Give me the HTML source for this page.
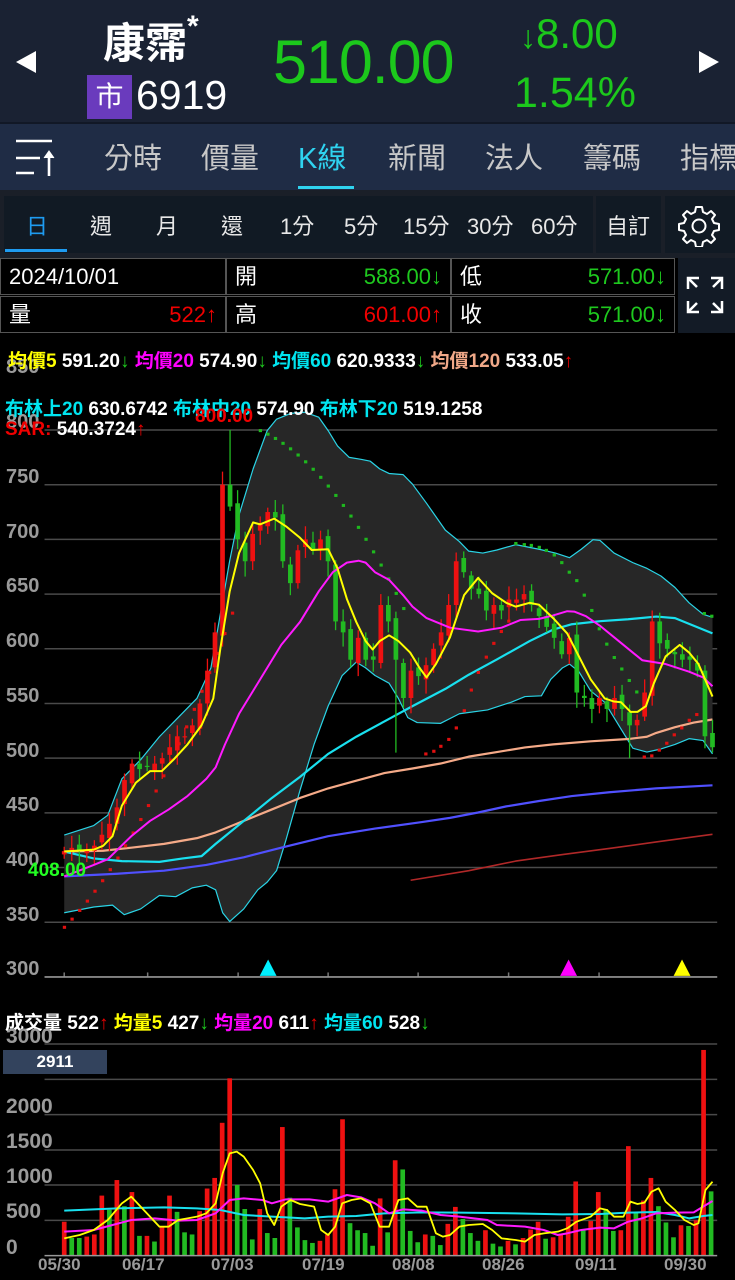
<!DOCTYPE html>
<html><head><meta charset="utf-8">
<style>
*{margin:0;padding:0;box-sizing:border-box}
body{width:735px;height:1280px;background:#000;overflow:hidden;position:relative;font-family:"Liberation Sans","Noto Sans CJK TC",sans-serif;color:#fff}
.abs{position:absolute}
#hdr{left:0;top:0;width:735px;height:122px;background:#1a2233}
#tabs{left:0;top:122px;width:735px;height:68px;background:#1f2c45;border-top:2px solid #111826}
#gap{left:0;top:190px;width:735px;height:68px;background:#1a1f28}
.tab{position:absolute;top:135px;font-size:29px;color:#c8c8c8;white-space:nowrap}
.pb{position:absolute;top:196px;height:57px;background:#111a24}
.per{position:absolute;top:209px;font-size:22px;color:#e8e8e8;white-space:nowrap}
.cell{position:absolute;height:37px;border:1px solid #555;background:#000;font-size:22px;line-height:35px}
.cell span{top:0!important}
.g{color:#1ec81e}.r{color:#f00000}
.lbl{position:absolute;left:6px;font-size:20px;font-weight:bold;color:#9a9a9a}
.leg{position:absolute;font-size:19px;font-weight:bold;white-space:nowrap}
.dt{position:absolute;top:1255px;font-size:17px;font-weight:bold;color:#9a9a9a}
</style></head><body>
<div id="hdr" class="abs"></div>
<svg class="abs" style="left:14px;top:50px" width="24" height="24"><polygon points="22,1 22,23 2,12" fill="#fff"/></svg>
<svg class="abs" style="left:697px;top:50px" width="24" height="24"><polygon points="2,1 2,23 22,12" fill="#fff"/></svg>
<div class="abs" style="left:103px;top:10px;font-size:42px;font-weight:bold;white-space:nowrap">康霈<span style="font-size:30px;vertical-align:top">*</span></div>
<div class="abs" style="left:87px;top:75px;width:45px;height:44px;background:#6a3bbd;font-size:28px;text-align:center;line-height:44px">市</div>
<div class="abs" style="left:136px;top:72px;font-size:41px">6919</div>
<div class="abs" style="left:273px;top:27px;font-size:61px;color:#1cc81c;letter-spacing:-1px">510.00</div>
<div class="abs" style="left:520px;top:10px;font-size:42px;color:#1cc81c;white-space:nowrap"><span style="font-size:32px;font-weight:bold">&#x2193;</span>8.00</div>
<div class="abs" style="left:514px;top:69px;font-size:43px;color:#1cc81c">1.54%</div>
<div id="tabs" class="abs"></div>
<svg class="abs" style="left:14px;top:138px" width="44" height="40"><g stroke="#fff" stroke-width="2.6" fill="none"><line x1="2" y1="3" x2="38" y2="3"/><line x1="2" y1="20" x2="26" y2="20"/><line x1="2" y1="35" x2="20" y2="35"/><line x1="35" y1="14" x2="35" y2="38"/><polyline points="30,20 35,13 40,20" fill="#fff" stroke-width="1"/></g></svg>
<div class="tab" style="left:104px">分時</div>
<div class="tab" style="left:201px">價量</div>
<div class="tab" style="left:298px;color:#2fd3f0">K線</div>
<div class="abs" style="left:298px;top:186px;width:56px;height:3px;background:#2fd3f0"></div>
<div class="tab" style="left:388px">新聞</div>
<div class="tab" style="left:485px">法人</div>
<div class="tab" style="left:583px">籌碼</div>
<div class="tab" style="left:680px">指標</div>
<div id="gap" class="abs"></div>
<div class="pb" style="left:4px;width:589px"></div>
<div class="pb" style="left:596px;width:65px"></div>
<div class="pb" style="left:665px;width:70px"></div>
<div class="per" style="left:26px;color:#1e9bf0">日</div>
<div class="abs" style="left:5px;top:249px;width:62px;height:3px;background:#1e9bf0"></div>
<div class="per" style="left:90px">週</div>
<div class="per" style="left:156px">月</div>
<div class="per" style="left:221px">還</div>
<div class="per" style="left:280px">1分</div>
<div class="per" style="left:344px">5分</div>
<div class="per" style="left:403px">15分</div>
<div class="per" style="left:467px">30分</div>
<div class="per" style="left:531px">60分</div>
<div class="per" style="left:606px">自訂</div>
<svg class="abs" style="left:678px;top:205px" width="42" height="42" viewBox="0 0 42 42"><path d="M18,2 h6 l1,5 l4,2 l4,-3 l4,4 l-3,4 l2,4 l5,1 v6 l-5,1 l-2,4 l3,4 l-4,4 l-4,-3 l-4,2 l-1,5 h-6 l-1,-5 l-4,-2 l-4,3 l-4,-4 l3,-4 l-2,-4 l-5,-1 v-6 l5,-1 l2,-4 l-3,-4 l4,-4 l4,3 l4,-2 z" fill="none" stroke="#fff" stroke-width="2" stroke-linejoin="round"/><circle cx="21" cy="21" r="6.5" fill="none" stroke="#fff" stroke-width="2"/></svg>
<div class="abs" style="left:0;top:258px;width:735px;height:76px;background:#000"></div>
<div class="cell" style="left:0;top:258px;width:226px"><span style="position:absolute;left:8px">2024/10/01</span></div>
<div class="cell" style="left:0;top:296px;width:226px"><span style="position:absolute;left:8px">量</span><span class="r" style="position:absolute;right:8px">522↑</span></div>
<div class="cell" style="left:226px;top:258px;width:225px"><span style="position:absolute;left:8px">開</span><span class="g" style="position:absolute;right:8px">588.00↓</span></div>
<div class="cell" style="left:226px;top:296px;width:225px"><span style="position:absolute;left:8px">高</span><span class="r" style="position:absolute;right:8px">601.00↑</span></div>
<div class="cell" style="left:451px;top:258px;width:224px"><span style="position:absolute;left:8px">低</span><span class="g" style="position:absolute;right:8px">571.00↓</span></div>
<div class="cell" style="left:451px;top:296px;width:224px"><span style="position:absolute;left:8px">收</span><span class="g" style="position:absolute;right:8px">571.00↓</span></div>
<div class="abs" style="left:678px;top:258px;width:57px;height:75px;background:#131b26"></div>
<svg class="abs" style="left:684px;top:274px" width="42" height="42" viewBox="0 0 42 42"><g stroke="#fff" stroke-width="2.5" fill="none"><path d="M4,15 V4 H15 M4,4 L13,13"/><path d="M27,4 H38 V15 M38,4 L29,13"/><path d="M4,27 V38 H15 M4,38 L13,29"/><path d="M38,27 V38 H27 M38,38 L29,29"/></g></svg>

<div class="lbl" style="top:356px">850</div>
<div class="lbl" style="top:411px">800</div>
<div class="lbl" style="top:466px">750</div>
<div class="lbl" style="top:521px">700</div>
<div class="lbl" style="top:575px">650</div>
<div class="lbl" style="top:630px">600</div>
<div class="lbl" style="top:685px">550</div>
<div class="lbl" style="top:740px">500</div>
<div class="lbl" style="top:794px">450</div>
<div class="lbl" style="top:849px">400</div>
<div class="lbl" style="top:904px">350</div>
<div class="lbl" style="top:958px">300</div>

<svg id="pc" class="abs" style="left:0;top:400px" width="735" height="600" viewBox="0 0 1568 1568" preserveAspectRatio="none"></svg>
<svg id="vc" class="abs" style="left:0;top:1000px" width="735" height="280" viewBox="0 0 1568 840" preserveAspectRatio="none"></svg>

<div class="leg" style="left:8px;top:346px"><span style="color:#ffff00">均價5</span> 591.20<span class="g">↓</span> <span style="color:#ff00ff">均價20</span> 574.90<span class="g">↓</span> <span style="color:#00e5f0">均價60</span> 620.9333<span class="g">↓</span> <span style="color:#f0a888">均價120</span> 533.05<span class="r">↑</span></div>
<div class="leg" style="left:5px;top:394px"><span style="color:#00e5f0">布林上20</span> 630.6742 <span style="color:#00e5f0">布林中20</span> 574.90 <span style="color:#00e5f0">布林下20</span> 519.1258</div>
<div class="leg" style="left:5px;top:419px"><span class="r">SAR:</span> 540.3724<span class="r">↑</span></div>
<div class="leg r" style="left:195px;top:406px">800.00</div>
<div class="leg" style="left:28px;top:860px;color:#22ff22">408.00</div>

<div class="leg" style="left:5px;top:1008px">成交量 522<span class="r">↑</span> <span style="color:#ffff00">均量5</span> 427<span class="g">↓</span> <span style="color:#ff00ff">均量20</span> 611<span class="r">↑</span> <span style="color:#00e5f0">均量60</span> 528<span class="g">↓</span></div>
<div class="lbl" style="top:1025px;font-size:21px">3000</div>
<div class="lbl" style="top:1095px;font-size:21px">2000</div>
<div class="lbl" style="top:1130px;font-size:21px">1500</div>
<div class="lbl" style="top:1165px;font-size:21px">1000</div>
<div class="lbl" style="top:1200px;font-size:21px">500</div>
<div class="lbl" style="top:1236px;font-size:21px">0</div>
<div class="abs" style="left:3px;top:1050px;width:104px;height:24px;background:#33435d;font-size:17px;font-weight:bold;text-align:center;line-height:24px">2911</div>
<div class="dt" style="left:38px">05/30</div>
<div class="dt" style="left:122px">06/17</div>
<div class="dt" style="left:211px">07/03</div>
<div class="dt" style="left:302px">07/19</div>
<div class="dt" style="left:392px">08/08</div>
<div class="dt" style="left:482px">08/26</div>
<div class="dt" style="left:575px">09/11</div>
<div class="dt" style="left:664px">09/30</div>

<script>
var NS='http://www.w3.org/2000/svg';
function el(svg,tag,a){var e=document.createElementNS(NS,tag);for(var k in a)e.setAttribute(k,a[k]);e.setAttribute('vector-effect','non-scaling-stroke');svg.appendChild(e);return e;}
var pc=document.getElementById('pc'),vc=document.getElementById('vc');
function py(p){return (30+(800-p)*1.094)*2.613;}
for(var v=850;v>=300;v-=50){el(pc,'line',{x1:95,x2:1530,y1:py(v),y2:py(v),stroke:'#4a4a4a','stroke-width':1.5});}
[137,315,508,700,892,1085,1278].forEach(function(x){el(pc,'line',{x1:x,x2:x,y1:1496,y2:1508,stroke:'#777','stroke-width':1.5});});
function pl(svg,pts,col,w){el(svg,'polyline',{points:pts,fill:'none',stroke:col,'stroke-width':w,'stroke-linejoin':'round'});}
var up="137,1137 200,1112 230,1085 260,990 300,940 340,880 380,830 420,780 450,700 470,560 490,420 510,300 540,180 570,80 590,50 620,35 650,32 680,45 700,80 720,120 745,150 770,155 790,160 810,180 830,192 860,195 880,220 910,270 950,340 980,370 1000,395 1030,400 1060,392 1100,378 1150,390 1185,400 1215,412 1240,390 1265,365 1280,367 1310,400 1350,425 1380,440 1410,460 1440,490 1470,530 1500,560 1520,568";
var lo="137,1340 200,1325 240,1320 265,1345 300,1330 340,1295 375,1298 410,1275 440,1268 460,1280 475,1340 490,1363 520,1330 550,1280 570,1260 590,1230 610,1150 640,1020 670,900 700,800 730,720 760,685 780,700 800,720 830,740 850,780 870,830 890,843 940,845 980,820 1040,810 1090,790 1120,775 1155,773 1175,730 1200,700 1215,690 1235,710 1260,760 1290,790 1320,850 1350,910 1380,920 1410,912 1440,900 1470,885 1500,890 1520,925";
el(pc,'polygon',{points:up+' '+lo.split(' ').reverse().join(' '),fill:'#272727',stroke:'none'});
pl(pc,up,'#2ad4e6',1.2);pl(pc,lo,'#2ad4e6',1.2);
pl(pc,"876,1255 1000,1230 1100,1205 1200,1188 1300,1172 1400,1155 1520,1135",'#b02828',1.6);
pl(pc,"137,1245 250,1238 350,1230 440,1215 520,1195 600,1170 700,1140 800,1120 900,1103 960,1092 1020,1078 1080,1062 1150,1048 1220,1035 1300,1025 1400,1015 1520,1007",'#5050ff',2.2);
pl(pc,"137,1180 220,1178 280,1170 350,1160 420,1145 460,1130 520,1100 580,1070 640,1040 700,1015 760,995 820,975 880,963 940,950 1000,932 1060,920 1120,908 1180,900 1260,892 1340,886 1380,880 1400,870 1440,855 1480,843 1520,835",'#f5aa88',2.2);
pl(pc,"137,1180 200,1198 260,1205 340,1207 390,1198 430,1192 460,1160 520,1100 580,1040 640,985 700,925 760,880 820,840 880,800 950,755 1000,718 1060,678 1130,630 1180,600 1220,586 1280,578 1340,573 1400,566 1440,570 1480,590 1520,610",'#19e0ef',2.2);
var sr=[];for(var i=0;i<23;i++){var t=i/22;sr.push([137+i*16.3,1378-(1378-557)*(0.55*t+0.45*t*t)]);}
var sg=[];for(var i=0;i<20;i++){var t=i/19;sg.push([555+i*16.1,80+465*(0.35*t+0.65*t*t)]);}
var sr2=[[908,925],[925,918],[940,905],[957,887],[973,857],[990,812],[1005,758],[1020,712],[1037,672],[1053,636],[1069,605],[1085,578]];
var sg2=[[1100,375],[1118,378],[1133,380],[1150,385],[1165,393],[1182,405],[1198,425],[1214,450],[1230,472],[1246,510],[1262,550],[1278,598],[1294,638],[1310,673],[1326,703],[1342,733],[1358,763],[1502,558],[1518,565]];
var sr3=[[1374,933],[1390,930],[1406,915],[1422,897],[1438,875],[1454,857],[1470,837],[1486,822]];
sr.concat(sr2,sr3).forEach(function(p){el(pc,'rect',{x:p[0]-3,y:p[1]-4,width:7,height:8,fill:'#e01010'});});
sg.concat(sg2).forEach(function(p){el(pc,'rect',{x:p[0]-3,y:p[1]-4,width:7,height:8,fill:'#1eb81e'});});
var C=[415,418,416,415,420,430,440,455,480,495,490,492,495,500,510,520,520,530,550,580,615,750,730,700,680,705,715,725,720,680,660,690,700,690,700,680,625,615,590,610,590,590,640,625,590,555,580,575,585,600,615,640,680,670,655,650,635,640,635,645,645,650,640,630,620,610,595,610,560,555,545,555,545,555,545,530,535,560,625,605,600,595,590,590,580,520,510];
var n=C.length,dx=1383/(n-1);
for(var i=0;i<n;i++){var c=C[i],o=i?C[i-1]+((i%3)-1)*3:412;var x=137+i*dx;var red=c>=o;var col=red?'#ee1111':'#22bb22';
var hi=Math.max(o,c)+4+(i*7%9),lw=Math.min(o,c)-4-(i*5%11);
if(i==21)hi=762;if(i==22)hi=800;if(i==44)lw=505;if(i==75)lw=500;
el(pc,'line',{x1:x,x2:x,y1:py(hi),y2:py(lw),stroke:col,'stroke-width':1.3});
var y1=py(Math.max(o,c)),y2=py(Math.min(o,c));if(y2-y1<3)y2=y1+3;
el(pc,'rect',{x:x-5,y:y1,width:10,height:y2-y1,fill:col});}
pl(pc,"137,1245 200,1215 230,1200 280,1140 320,1100 360,1070 400,1035 440,990 460,960 480,900 510,820 560,720 600,640 640,580 680,500 710,450 740,425 765,420 780,425 800,450 830,470 860,510 880,540 910,570 960,595 1020,605 1070,595 1110,575 1150,572 1180,563 1210,552 1225,553 1250,565 1280,590 1320,630 1370,680 1420,690 1470,710 1500,725 1520,748",'#ff1aff',2);
pl(pc,"137,1180 200,1175 220,1165 240,1140 260,1060 290,1000 320,970 345,970 370,940 400,900 430,850 455,780 470,650 490,500 510,400 540,320 555,325 585,310 610,330 640,360 665,392 700,390 720,440 740,520 760,580 780,630 795,652 810,630 830,615 850,630 875,660 895,700 910,725 930,690 960,620 990,510 1020,465 1050,505 1080,530 1100,540 1130,530 1150,535 1180,570 1210,610 1235,670 1260,730 1290,780 1310,788 1325,790 1345,815 1360,815 1378,800 1395,740 1420,670 1450,640 1470,660 1490,690 1520,775",'#ffff00',2);
el(pc,'line',{x1:95,x2:1530,y1:1508,y2:1508,stroke:'#999','stroke-width':1.5});
[[572,'#00f0ff'],[1213,'#ff00ff'],[1455,'#ffff00']].forEach(function(t){el(pc,'polygon',{points:(t[0]-18)+',1505 '+(t[0]+18)+',1505 '+t[0]+',1462',fill:t[1]});});
[132,238,344,450,555,661].forEach(function(y){el(vc,'line',{x1:95,x2:1530,y1:y,y2:y,stroke:'#4a4a4a','stroke-width':1.5});});
var V="480r 250g 250g 270r 300r 850r 650g 1070r 700g 900r 280g 280r 200g 400r 850r 620g 330g 300g 630r 950r 1100r 1880r 2510r 1000g 660g 230g 660r 320g 250g 1820r 820g 400g 220g 180g 210r 300r 940r 1930r 460g 360g 320g 140g 810r 330g 1350r 1220g 350g 190g 300r 280g 150g 450r 690r 520g 320g 210g 360r 170g 130g 210r 160g 250r 370r 480r 240g 260r 310r 550r 1050r 360g 490r 900r 660g 350g 360r 1550r 620g 780r 1100r 700g 470g 260g 430r 420g 500r 2911r 910g".split(' ');
var vd=1380/(V.length-1);
V.forEach(function(s,i){var v=parseFloat(s),x=137+i*vd,h=v*0.212;el(vc,'rect',{x:x-5,y:767-h,width:10,height:h,fill:s.slice(-1)=='r'?'#ee1111':'#22bb22'});});
pl(vc,"137,632 250,625 350,622 420,625 470,630 520,645 580,650 650,655 700,650 760,648 820,640 900,637 980,638 1100,640 1200,643 1280,642 1340,638 1400,636 1440,645 1470,655 1500,648 1520,645",'#19e0ef',2);
pl(vc,"137,695 200,690 240,675 280,660 330,655 380,662 420,660 460,640 490,600 520,595 560,600 580,610 610,598 660,598 700,605 740,585 770,592 800,610 830,640 860,628 900,632 940,645 980,650 1040,660 1060,675 1120,680 1160,690 1190,705 1210,700 1240,690 1280,683 1310,685 1340,665 1370,655 1400,640 1440,638 1480,637 1500,620 1520,603",'#ff1aff',2);
pl(vc,"137,715 170,705 200,690 230,660 260,610 280,590 300,620 320,650 340,680 360,680 380,660 400,655 420,650 440,640 460,610 475,520 490,460 505,455 520,470 540,510 555,550 570,640 585,675 600,620 620,600 640,612 670,620 685,690 700,705 715,680 730,610 750,600 770,595 790,610 810,680 830,680 850,600 870,595 890,620 910,620 930,700 945,710 960,705 980,680 1000,675 1030,672 1050,690 1070,715 1100,720 1120,725 1140,705 1160,700 1190,695 1210,685 1230,665 1260,650 1280,625 1295,630 1310,650 1330,650 1345,605 1360,612 1375,608 1390,575 1405,565 1420,605 1440,630 1460,660 1480,675 1490,670 1505,570 1520,545",'#ffff00',1.8);
el(vc,'line',{x1:95,x2:1530,y1:767,y2:767,stroke:'#999','stroke-width':1.5});
</script>
</body></html>
